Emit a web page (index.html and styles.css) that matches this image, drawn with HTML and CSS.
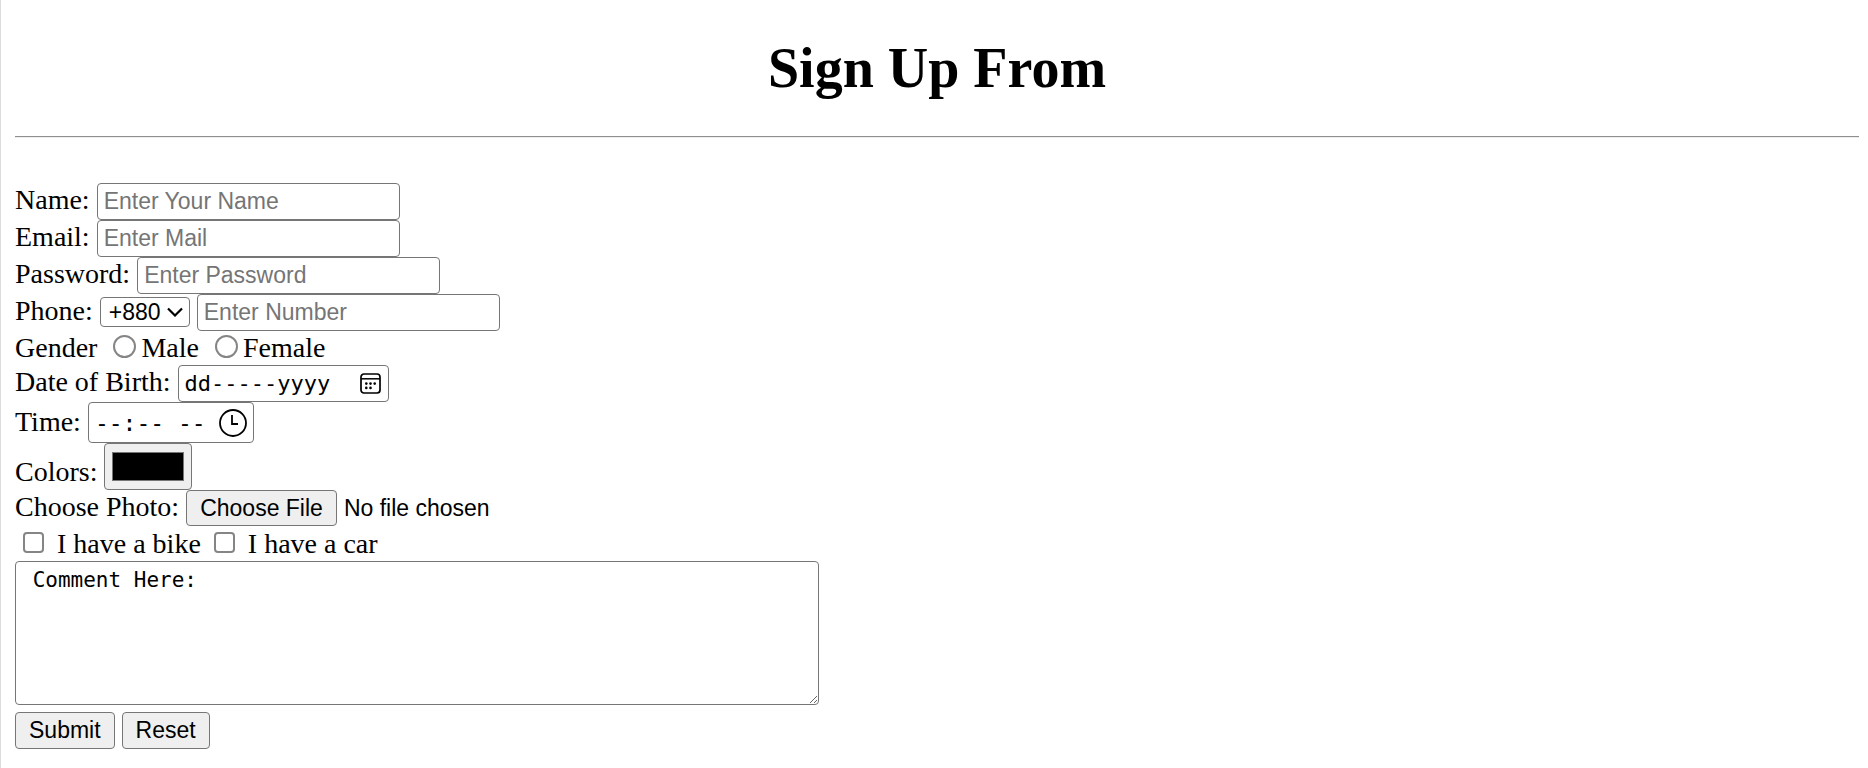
FILE: index.html
```
<!DOCTYPE html>
<html lang="en">
<head>
<meta charset="utf-8">
<title>Sign Up From</title>
<link rel="stylesheet" href="styles.css">
</head>
<body class="page">
<h1 class="title">Sign Up From</h1>
<hr class="rule">
<form class="form">
  <div class="row"><label for="name">Name:</label><input class="field" id="name" type="text" placeholder="Enter Your Name"></div>
  <div class="row"><label for="email">Email:</label><input class="field" id="email" type="email" placeholder="Enter Mail"></div>
  <div class="row"><label for="password">Password:</label><input class="field" id="password" type="password" placeholder="Enter Password"></div>
  <div class="row">
    <label for="phone">Phone:</label>
    <span class="select-wrap">
      <select class="select" aria-label="Country code"><option>+880</option></select>
      <svg class="chevron" viewBox="0 0 16 10" aria-hidden="true"><path d="M1 1.5 8 8.5 15 1.5" fill="none" stroke="#000" stroke-width="2.2"/></svg>
    </span>
    <input class="field" id="phone" type="tel" placeholder="Enter Number">
  </div>
  <div class="row row-choice">
    <span class="legend">Gender</span>
    <input class="radio" id="male" type="radio" name="gender"><label for="male">Male</label>
    <input class="radio" id="female" type="radio" name="gender"><label for="female">Female</label>
  </div>
  <div class="row">
    <label for="birth">Date of Birth:</label>
    <span class="picker picker-date">
      <input class="picker-text" id="birth" type="text" value="dd-----yyyy">
      <button class="picker-button" type="button" aria-label="Open calendar">
        <svg class="icon-date" viewBox="0 0 21 21" aria-hidden="true"><rect x="1" y="1" width="19" height="19" rx="3" fill="none" stroke="#000" stroke-width="1.7"/><path d="M1 5.8h19" stroke="#000" stroke-width="1.5"/><g fill="#000"><circle cx="6.3" cy="10.6" r="1.3"/><circle cx="10.5" cy="10.6" r="1.3"/><circle cx="14.7" cy="10.6" r="1.3"/><circle cx="6.3" cy="14.9" r="1.3"/><circle cx="10.5" cy="14.9" r="1.3"/></g></svg>
      </button>
    </span>
  </div>
  <div class="row row-time">
    <label for="time">Time:</label>
    <span class="picker picker-time">
      <input class="picker-text" id="time" type="text" value="--:-- --">
      <button class="picker-button" type="button" aria-label="Open time list">
        <svg class="icon-time" viewBox="0 0 28 28" aria-hidden="true"><circle cx="14" cy="14" r="13" fill="none" stroke="#000" stroke-width="1.8"/><path d="M13 6v9h6" fill="none" stroke="#000" stroke-width="1.8"/></svg>
      </button>
    </span>
  </div>
  <div class="row row-color"><label for="color">Colors:</label><input class="color" id="color" type="color" value="#000000"></div>
  <div class="row"><label for="photo">Choose Photo:</label><input class="file" id="photo" type="file"></div>
  <div class="row row-choice row-check">
    <input class="check" id="bike" type="checkbox"><label for="bike">I have a bike</label>
    <input class="check" id="car" type="checkbox"><label for="car">I have a car</label>
  </div>
  <textarea class="comment" aria-label="Comment"> Comment Here:</textarea>
  <div class="row actions"><button class="button" type="submit">Submit</button><button class="button" type="reset">Reset</button></div>
</form>
</body>
</html>
```
FILE: styles.css
```
* {
  box-sizing: border-box;
}

.page {
  min-height: 100vh;
  margin: 0;
  padding: 36px 9px 0 14px;
  border-left: 1px solid #dcdcdc;
  background: #fff;
  color: #000;
  font-family: "Liberation Serif", "Times New Roman", serif;
  font-size: 28px;
  line-height: 32px;
}

.title {
  margin: 0;
  font-size: 56px;
  line-height: 64px;
  text-align: center;
}

.rule {
  height: 2px;
  margin: 36px 0 45px;
  border: 0;
  border-top: 1px solid #8f8f8f;
  border-bottom: 1px solid #ededed;
}

.form {
  margin: 0;
}

.row {
  display: flex;
  align-items: baseline;
  gap: 7px;
  height: 37px;
}

.field,
.select,
.file,
.button {
  font-family: "Liberation Sans", Arial, sans-serif;
  font-size: 23px;
  color: #000;
}

.field {
  width: 303px;
  height: 37px;
  padding: 2px 6px;
  border: 1px solid #767676;
  border-radius: 4px;
  background: #fff;
}

.field::placeholder {
  color: #757575;
}

.select-wrap {
  position: relative;
}

.select {
  appearance: none;
  width: 90px;
  height: 30px;
  padding: 0 0 0 8px;
  border: 1px solid #767676;
  border-radius: 4px;
  background: #fff;
}

.chevron {
  position: absolute;
  top: 12px;
  right: 7px;
  width: 16px;
  height: 10px;
  pointer-events: none;
}

.row-choice {
  align-items: center;
  height: 34px;
  gap: 5px;
}

.legend {
  margin-right: 11px;
}

.radio,
.check {
  appearance: none;
  margin: 0 0 4px;
  border: 2px solid #858585;
  background: #fff;
}

.radio {
  width: 23px;
  height: 23px;
  border-radius: 50%;
}

.radio + label + .radio {
  margin-left: 11px;
}

.picker {
  display: flex;
  align-items: center;
  justify-content: space-between;
  height: 37px;
  padding: 0 7px 0 6px;
  border: 1px solid #767676;
  border-radius: 4px;
}

.picker-date {
  width: 211px;
}

.picker-time {
  width: 166px;
  height: 41px;
  padding-right: 6px;
}

.picker-text {
  flex: 1;
  min-width: 0;
  padding: 0;
  border: 0;
  background: transparent;
  color: #000;
  font-family: "DejaVu Sans Mono", Consolas, monospace;
  font-size: 22px;
}

.picker-time .picker-text {
  font-size: 23px;
}

.picker-button {
  display: flex;
  padding: 0;
  border: 0;
  background: none;
}

.icon-date {
  width: 21px;
  height: 21px;
}

.icon-time {
  width: 28px;
  height: 28px;
}

.row-time {
  height: 41px;
}

.row-color {
  height: 47px;
}

.color {
  width: 88px;
  height: 47px;
  padding: 8px 7px;
  border: 1px solid #767676;
  border-radius: 4px;
  background: #efefef;
}

.color::-webkit-color-swatch-wrapper {
  padding: 0;
}

.color::-webkit-color-swatch {
  border: 1px solid #767676;
}

.file::file-selector-button {
  height: 36px;
  margin: 0 7px 0 0;
  padding: 2px 13px;
  border: 1px solid #767676;
  border-radius: 4px;
  background: #efefef;
  color: #000;
  font: inherit;
}

.row-check {
  gap: 13px;
  padding-left: 8px;
}

.check {
  width: 21px;
  height: 21px;
  border-radius: 4px;
}

.comment {
  display: block;
  width: 804px;
  max-width: 100%;
  height: 144px;
  margin: 0 0 7px;
  padding: 4px;
  border: 1px solid #767676;
  border-radius: 4px;
  color: #000;
  font-family: "DejaVu Sans Mono", Consolas, monospace;
  font-size: 21px;
  line-height: 28px;
}

.button {
  height: 37px;
  padding: 2px 13px;
  border: 1px solid #767676;
  border-radius: 4px;
  background: #efefef;
}
```
